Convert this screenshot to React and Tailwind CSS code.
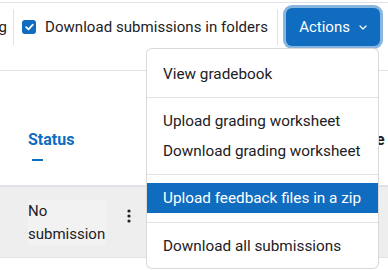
import React from "react";

const menuGroups = [
  ["View gradebook"],
  ["Upload grading worksheet", "Download grading worksheet"],
  ["Upload feedback files in a zip"],
  ["Download all submissions"],
];

const Kebab = () => (
  <svg width="4" height="14" viewBox="0 0 4 14" className="fill-[#1d2125]">
    <circle cx="2" cy="2" r="1.6" />
    <circle cx="2" cy="7" r="1.6" />
    <circle cx="2" cy="12" r="1.6" />
  </svg>
);

const App = () => {
  return (
    <div
      className="relative w-[388px] h-[270px] overflow-hidden bg-white text-[#1d2125]"
      style={{ fontFamily: "Roboto, 'Liberation Sans', sans-serif" }}
    >
      {/* Toolbar */}
      <div className="mt-[2px] h-[69px] border-t border-b border-[#dee2e6]">
        <div className="mt-[5px] h-[38px] flex items-center text-[15px] whitespace-nowrap">
          <div className="w-[7px] overflow-hidden flex justify-end shrink-0">
            <span>Quick grading</span>
          </div>
          <div className="ml-[6px] w-px h-[36px] bg-[#dee2e6] shrink-0" />
          <div className="ml-[8px] w-[14px] h-[14px] rounded-[3px] bg-[#0f6cbf] flex items-center justify-center shrink-0">
            <svg width="9" height="8" viewBox="0 0 9 8" fill="none">
              <path d="M1.2 4.2 L3.5 6.3 L7.8 1.6" stroke="white" strokeWidth="1.8" strokeLinecap="round" strokeLinejoin="round" />
            </svg>
          </div>
          <span className="ml-[9px] tracking-[0.05px]">Download submissions in folders</span>
          <div className="ml-[9px] w-px h-[36px] bg-[#dee2e6] shrink-0" />
          <button className="ml-[8px] h-[38px] w-[94px] rounded-[6px] bg-[#0f6cbf] text-white flex items-center justify-center gap-[9px] shadow-[0_0_0_3px_#87b5df] shrink-0">
            <span>Actions</span>
            <svg width="8" height="5" viewBox="0 0 8 5" fill="none">
              <path d="M1 1 L4 4 L7 1" stroke="white" strokeWidth="1.2" strokeLinecap="round" strokeLinejoin="round" />
            </svg>
          </button>
        </div>
      </div>

      {/* Table header */}
      <div className="relative h-[114px]">
        <div className="absolute left-[28px] top-[57px] flex flex-col items-start">
          <span className="text-[16px] font-bold leading-[24px] text-[#0f6cbf]">Status</span>
          <span className="ml-[4px] mt-[7px] w-[11px] h-[2px] bg-[#0f6cbf]" />
        </div>
        <span className="absolute left-[342px] top-[57px] text-[16px] font-bold leading-[24px]">Grade</span>
      </div>

      {/* Table row */}
      <div className="border-t-2 border-b border-[#dee2e6] bg-[#eeeeee] h-[73px] flex items-start">
        <div className="ml-[28px] mt-[13px] w-[78px] bg-[#f2f2f2] text-[15px] leading-[22.5px]">
          No
          <br />
          submission
        </div>
        <div className="ml-[21px] mt-[22px]">
          <Kebab />
        </div>
      </div>

      {/* Actions dropdown */}
      <div className="absolute left-[146px] top-[48px] w-[233px] rounded-[6px] border border-black/15 bg-white pt-[10px] pb-[7px] text-[15.3px]">
        {menuGroups.map((group, gi) => (
          <div key={gi}>
            {gi > 0 && (
              <div className={(gi === 3 ? "mt-[9px]" : "mt-2") + " mb-2 border-t border-[#dee2e6]"} />
            )}
            {group.map((item) => (
              <div
                key={item}
                className={
                  "h-[30px] px-4 flex items-center whitespace-nowrap " +
                  (item === "Upload feedback files in a zip" ? "bg-[#0f6cbf] text-white" : "")
                }
              >
                {item}
              </div>
            ))}
          </div>
        ))}
      </div>
    </div>
  );
};

export default App;
